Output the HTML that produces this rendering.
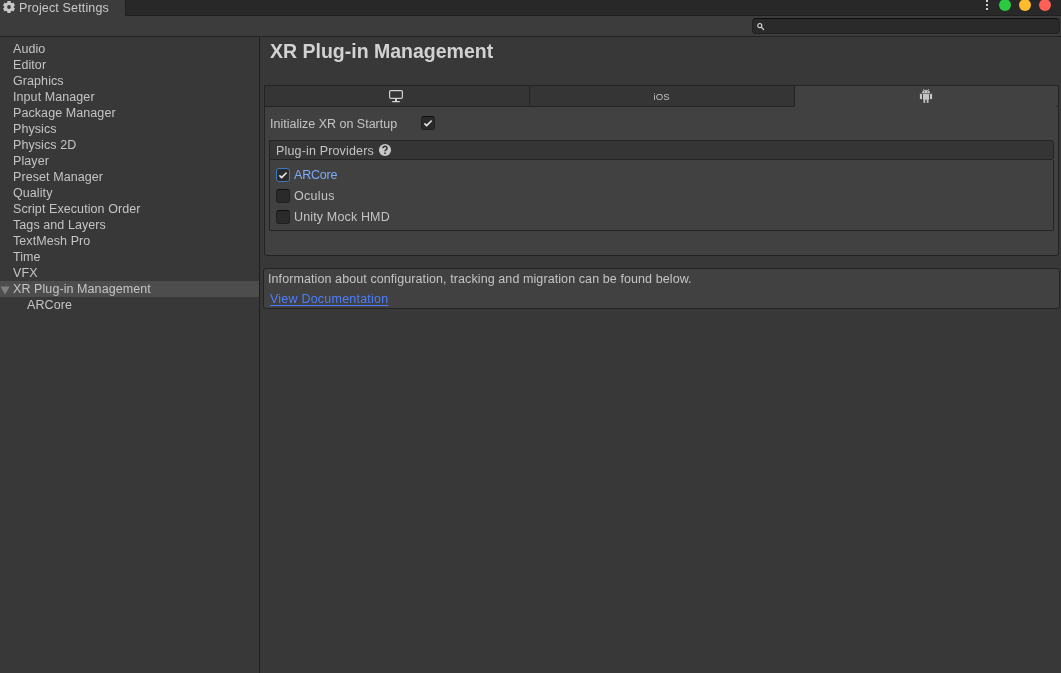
<!DOCTYPE html>
<html><head><meta charset="utf-8">
<style>
*{box-sizing:border-box;margin:0;padding:0}
html,body{width:1061px;height:673px;overflow:hidden;background:#383838;font-family:"Liberation Sans",sans-serif;font-size:12.5px;color:#c4c4c4}
.abs{position:absolute}
#strip{left:0;top:0;width:1061px;height:16px;background:#282828;border-bottom:1px solid #202020}
#tab{left:0;top:0;width:125px;height:16px;background:#3c3c3c}
#tab .t{left:19px;top:1px;letter-spacing:.15px;line-height:15px;color:#c8c8c8;white-space:nowrap}
#toolbar{left:0;top:16px;width:1061px;height:21px;background:#3c3c3c;border-bottom:1px solid #232323}
#search{left:752px;top:18px;width:308px;height:16px;background:#2a2a2a;border:1px solid #212121;border-top-color:#0d0d0d;border-radius:4px}
#sidebar{left:0;top:37px;width:259px;height:636px;background:#383838}
#split{left:259px;top:37px;width:1px;height:636px;background:#1f1f1f}
.item{position:absolute;left:13px;height:16px;line-height:16px;white-space:nowrap;color:#c4c4c4;letter-spacing:.08px}
#sel{left:0;top:281px;width:259px;height:16px;background:#4d4d4d}
#title{left:270px;top:39px;font-size:19.5px;letter-spacing:0px;font-weight:bold;color:#d2d2d2;white-space:nowrap;line-height:24px}
#tabsbox{left:264px;top:85px;width:795px;height:171px;background:#414141;border:1px solid #232323;border-radius:0 0 3px 3px}
.ptab{position:absolute;top:85px;height:22px;background:#353535;border:1px solid #232323}
.lbl{position:absolute;white-space:nowrap;line-height:16px}
.cb{position:absolute;width:14px;height:14px;background:#2a2a2a;border:1px solid #212121;border-top-color:#101010;border-radius:3px}
.cb svg{left:-1px!important;top:-1px!important}
#provhdr{left:269px;top:140px;width:785px;height:20px;background:#353535;border:1px solid #232323;border-radius:0 3px 3px 0}
#provbody{left:269px;top:160px;width:785px;height:71px;background:#414141;border:1px solid #232323;border-top:none;border-radius:0 0 2px 2px}
#help{left:263px;top:268px;width:797px;height:41px;background:#414141;border:1px solid #232323;border-radius:3px}
</style></head><body><div id="root" style="position:absolute;left:0;top:0;width:1061px;height:673px;will-change:transform">
<div id="strip" class="abs"></div>
<div class="abs" style="left:125px;top:0;width:1px;height:16px;background:#202020"></div>
<div id="tab" class="abs">
  <svg class="abs" style="left:0;top:0" width="18" height="15" viewBox="0 0 18 15"><path fill="#c8c8c8" fill-rule="evenodd" d="M7.32 2.40 L7.40 1.01 L10.60 1.01 L10.68 2.40 L12.15 3.25 L13.38 2.62 L14.99 5.40 L13.83 6.15 L13.83 7.85 L14.99 8.60 L13.38 11.38 L12.15 10.75 L10.68 11.60 L10.60 12.99 L7.40 12.99 L7.32 11.60 L5.85 10.75 L4.62 11.38 L3.01 8.60 L4.17 7.85 L4.17 6.15 L3.01 5.40 L4.62 2.62 L5.85 3.25Z M10.90 7 A1.9 1.9 0 1 0 7.10 7 A1.9 1.9 0 1 0 10.90 7Z"/></svg>
  <div class="abs t">Project Settings</div>
</div>
<div id="toolbar" class="abs"></div>
<div id="search" class="abs">
  <svg class="abs" style="left:4px;top:3px" width="9" height="9" viewBox="0 0 9 9"><circle cx="2.8" cy="3.6" r="2.05" fill="none" stroke="#d0d0d0" stroke-width="1.1"/><path d="M4.3 5.1L6.6 7.5" stroke="#d0d0d0" stroke-width="1.2" stroke-linecap="round"/></svg>
</div>
<!-- window buttons -->
<div class="abs" style="left:986px;top:0;width:2px;height:2px;background:#cfcfcf"></div>
<div class="abs" style="left:986px;top:4px;width:2px;height:2px;background:#cfcfcf"></div>
<div class="abs" style="left:986px;top:8px;width:2px;height:2px;background:#cfcfcf"></div>
<div class="abs" style="left:999px;top:-1px;width:12px;height:12px;border-radius:50%;background:#29c940"></div>
<div class="abs" style="left:1019px;top:-1px;width:12px;height:12px;border-radius:50%;background:#fdbc2e"></div>
<div class="abs" style="left:1039px;top:-1px;width:12px;height:12px;border-radius:50%;background:#fe5f57"></div>

<div id="sidebar" class="abs"></div>
<div id="sel" class="abs"></div>
<svg class="abs" style="left:0;top:286px" width="10" height="9" viewBox="0 0 10 9"><path d="M0.5 0.5h9L5 8.5z" fill="#808080"/></svg>
<div class="item" style="top:41px">Audio</div>
<div class="item" style="top:57px">Editor</div>
<div class="item" style="top:73px">Graphics</div>
<div class="item" style="top:89px">Input Manager</div>
<div class="item" style="top:105px">Package Manager</div>
<div class="item" style="top:121px">Physics</div>
<div class="item" style="top:137px">Physics 2D</div>
<div class="item" style="top:153px">Player</div>
<div class="item" style="top:169px">Preset Manager</div>
<div class="item" style="top:185px">Quality</div>
<div class="item" style="top:201px">Script Execution Order</div>
<div class="item" style="top:217px">Tags and Layers</div>
<div class="item" style="top:233px">TextMesh Pro</div>
<div class="item" style="top:249px">Time</div>
<div class="item" style="top:265px">VFX</div>
<div class="item" style="top:281px">XR Plug-in Management</div>
<div class="item" style="top:297px;left:27px">ARCore</div>
<div id="split" class="abs"></div>

<div id="title" class="abs">XR Plug-in Management</div>
<div id="tabsbox" class="abs"></div>
<div class="ptab" style="left:264px;width:266px"></div>
<div class="ptab" style="left:529px;width:266px"></div>
<!-- desktop icon -->
<svg class="abs" style="left:384px;top:86px" width="24" height="20" viewBox="0 0 24 20"><rect x="5.6" y="4.6" width="12.8" height="7.8" rx="1.2" fill="none" stroke="#d0d0d0" stroke-width="1.2"/><rect x="11" y="13" width="2" height="2.5" fill="#d0d0d0"/><rect x="8" y="15" width="8" height="1.2" rx=".6" fill="#d0d0d0"/></svg>
<div class="lbl" style="left:653.6px;top:88.5px;font-size:9.6px;line-height:16px;color:#c4c4c4">iOS</div>
<!-- android icon -->
<svg class="abs" style="left:900px;top:80px" width="60" height="30" viewBox="0 0 60 30"><g fill="#c4c4c4"><path d="M22 13.2A4 3.3 0 0 1 30 13.2Z"/><rect x="23" y="13.8" width="6.1" height="6"/><rect x="19.9" y="13.8" width="2.1" height="5.3"/><rect x="30" y="13.8" width="2.1" height="5.3"/><rect x="23.5" y="19.5" width="1.7" height="3.4"/><rect x="26.8" y="19.5" width="1.7" height="3.4"/></g><path d="M23.2 9L24.4 10.6M28.8 9L27.6 10.6" stroke="#c4c4c4" stroke-width=".8"/><circle cx="24.5" cy="11.7" r=".55" fill="#414141"/><circle cx="27.5" cy="11.7" r=".55" fill="#414141"/></svg>

<div class="lbl" style="left:270px;top:116px">Initialize XR on Startup</div>
<div class="cb" style="left:421px;top:116px"><svg class="abs" style="left:0;top:0" width="14" height="14" viewBox="0 0 14 14"><path d="M3.9 7.9L5.6 9.6L10.2 5" fill="none" stroke="#e8e8e8" stroke-width="1.6" stroke-linecap="round" stroke-linejoin="round"/></svg></div>

<div class="abs" style="left:1056px;top:106px;width:2px;height:1px;background:#282828"></div>
<div id="provhdr" class="abs"></div>
<div id="provbody" class="abs"></div>
<div class="lbl" style="left:276px;top:143px;letter-spacing:.16px">Plug-in Providers</div>
<svg class="abs" style="left:370px;top:140px" width="30" height="20" viewBox="0 0 30 20"><circle cx="15" cy="10" r="6.1" fill="#c8c8c8"/><path d="M13 8.3A2 1.9 0 1 1 15.9 9.9C15.2 10.3 15 10.6 15 11.3" fill="none" stroke="#2e2e2e" stroke-width="1.6"/><rect x="14.2" y="12.5" width="1.6" height="1.5" fill="#2e2e2e"/></svg>
<div class="cb" style="left:276px;top:168px;border-color:#3a79bb"><svg class="abs" style="left:0;top:0" width="14" height="14" viewBox="0 0 14 14"><path d="M3.9 7.9L5.6 9.6L10.2 5" fill="none" stroke="#e8e8e8" stroke-width="1.6" stroke-linecap="round" stroke-linejoin="round"/></svg></div>
<div class="lbl" style="left:294px;top:167px;color:#7babf6;letter-spacing:-.2px">ARCore</div>
<div class="cb" style="left:276px;top:189px"></div>
<div class="lbl" style="left:294px;top:188px;letter-spacing:.3px">Oculus</div>
<div class="cb" style="left:276px;top:210px"></div>
<div class="lbl" style="left:294px;top:209px;letter-spacing:.15px">Unity Mock HMD</div>

<div id="help" class="abs"></div>
<div class="lbl" style="left:268px;top:271px;letter-spacing:.09px">Information about configuration, tracking and migration can be found below.</div>
<div class="lbl" style="left:270px;top:291px;color:#4c7eff;text-decoration:underline;text-underline-offset:2px;letter-spacing:.22px">View Documentation</div>
</div></body></html>
